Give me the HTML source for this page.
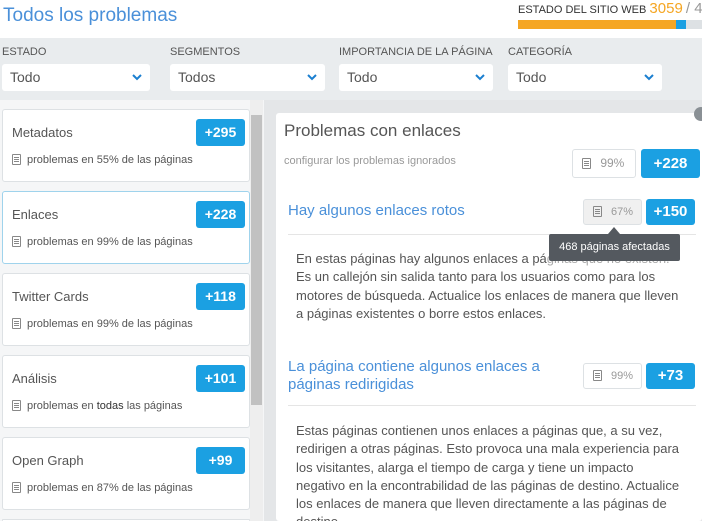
<!DOCTYPE html>
<html style="width:702px;height:521px;overflow:hidden"><head><meta charset="utf-8"><style>
*{box-sizing:border-box;margin:0;padding:0}
body{width:702px;height:521px;overflow:hidden;background:#e9ecee;font-family:"Liberation Sans",sans-serif;position:relative;color:#555}
.a{position:absolute;white-space:nowrap}
.sel{position:absolute;top:64px;height:27px;width:148px;background:#fff;border-radius:3px;font-size:14px;color:#555;padding:5px 8px}
.sel svg{position:absolute;right:8px;top:10px}
.lbl{position:absolute;top:46px;font-size:11px;color:#555}
.card{position:absolute;left:2px;width:248px;height:73px;background:#fff;border:1px solid #dde1e4;border-radius:3px;overflow:hidden}
.card .t{position:absolute;left:9px;top:15px;font-size:13px;color:#555}
.card .b{position:absolute;right:4px;top:9px;width:49px;height:27px;background:#1ba0e2;color:#fff;font-size:14px;font-weight:bold;text-align:center;line-height:27px;border-radius:3px}
.card .s{position:absolute;left:9px;top:44px;font-size:11px;color:#555;white-space:nowrap}
.ic{display:inline-block;width:9px;height:11px;border:1px solid #888;border-radius:1px;vertical-align:-2px;margin-right:6px;background:linear-gradient(#888,#888) 1px 2px/5px 1px no-repeat,linear-gradient(#888,#888) 1px 4px/5px 1px no-repeat,linear-gradient(#888,#888) 1px 6px/5px 1px no-repeat}
.bb{position:absolute;background:#1ba0e2;color:#fff;font-weight:bold;font-size:14px;text-align:center;border-radius:3px}
.pc{position:absolute;border:1px solid #dde1e4;border-radius:3px;font-size:11px;color:#999;padding-left:9px;white-space:nowrap}
.p{position:absolute;font-size:13px;line-height:18.3px;color:#555;white-space:nowrap}
</style></head><body>
<div class="a" style="left:0;top:0;width:702px;height:38px;background:#fff"></div>
<div class="a" style="left:3px;top:5px;font-size:19px;color:#4a90d9">Todos los problemas</div>
<div class="a" style="left:518px;top:0px;font-size:11px;color:#333">ESTADO DEL SITIO WEB <span style="color:#f5a623;font-size:15px">3059</span> <span style="color:#999;font-size:15px">/ 4</span></div>
<div class="a" style="left:518px;top:20px;width:184px;height:9px;background:#dde1e4"></div>
<div class="a" style="left:518px;top:20px;width:158px;height:9px;background:#f5a623"></div>
<div class="a" style="left:676px;top:20px;width:10px;height:9px;background:#1ba0e2"></div>
<div class="lbl" style="left:2px">ESTADO</div>
<div class="lbl" style="left:170px">SEGMENTOS</div>
<div class="lbl" style="left:339px">IMPORTANCIA DE LA PÁGINA</div>
<div class="lbl" style="left:508px">CATEGORÍA</div>
<div class="sel" style="left:2px">Todo<svg width="10" height="7"><path d="M1 1l4 4 4-4" stroke="#1b7fd0" stroke-width="2" fill="none"/></svg></div>
<div class="sel" style="left:170px;width:155px">Todos<svg width="10" height="7"><path d="M1 1l4 4 4-4" stroke="#1b7fd0" stroke-width="2" fill="none"/></svg></div>
<div class="sel" style="left:339px;width:154px">Todo<svg width="10" height="7"><path d="M1 1l4 4 4-4" stroke="#1b7fd0" stroke-width="2" fill="none"/></svg></div>
<div class="sel" style="left:508px;width:154px">Todo<svg width="10" height="7"><path d="M1 1l4 4 4-4" stroke="#1b7fd0" stroke-width="2" fill="none"/></svg></div>
<div class="a" style="left:0;top:100px;width:264px;height:421px;background:#f5f6f7"></div>
<div class="a" style="left:250px;top:100px;width:13px;height:421px;background:#eee"></div>
<div class="a" style="left:251px;top:115px;width:11px;height:290px;background:#c1c1c1"></div>
<div class="card" style="top:109px"><div class="t">Metadatos</div><div class="b">+295</div><div class="s"><span class="ic"></span>problemas en 55% de las páginas</div></div>
<div class="card" style="top:191px;border-color:#9fd3ec"><div class="t">Enlaces</div><div class="b">+228</div><div class="s"><span class="ic"></span>problemas en 99% de las páginas</div></div>
<div class="card" style="top:273px"><div class="t">Twitter Cards</div><div class="b">+118</div><div class="s"><span class="ic"></span>problemas en 99% de las páginas</div></div>
<div class="card" style="top:355px"><div class="t">Análisis</div><div class="b">+101</div><div class="s"><span class="ic"></span>problemas en <b style="font-weight:normal;color:#333">todas</b> las páginas</div></div>
<div class="card" style="top:437px"><div class="t">Open Graph</div><div class="b">+99</div><div class="s"><span class="ic"></span>problemas en 87% de las páginas</div></div>
<div class="card" style="top:519px;height:2px;border-bottom:none"></div>
<div class="a" style="left:264px;top:100px;width:438px;height:421px;background:#e4e6e8"></div>
<div class="a" style="left:276px;top:113px;width:426px;height:408px;background:#fff;border-radius:3px"></div>
<div class="a" style="left:694px;top:107px;width:14px;height:14px;border-radius:50%;background:#8a9095"></div>
<div class="a" style="left:284px;top:121px;font-size:17px;color:#555">Problemas con enlaces</div>
<div class="a" style="left:284px;top:155px;font-size:11px;color:#999">configurar los problemas ignorados</div>
<div class="pc" style="left:572px;top:149px;width:64px;height:29px;line-height:27px;font-size:12px"><span class="ic"></span> 99%</div>
<div class="bb" style="left:641px;top:149px;width:59px;height:29px;line-height:29px;font-size:15px">+228</div>
<div class="a" style="left:288px;top:202px;font-size:15px;color:#4a90d9">Hay algunos enlaces rotos</div>
<div class="pc" style="left:583px;top:199px;width:59px;height:26px;line-height:24px;background:#f0f0f0"><span class="ic"></span> 67%</div>
<div class="bb" style="left:646px;top:199px;width:49px;height:26px;line-height:26px;font-size:15px">+150</div>
<div class="a" style="left:288px;top:234px;width:408px;height:1px;background:#e5e5e5"></div>
<div class="p" style="left:296px;top:250px;width:400px">En estas páginas hay algunos enlaces a pá<span style="color:#aaa">ginas que no existen.</span><br>Es un callejón sin salida tanto para los usuarios como para los<br>motores de búsqueda. Actualice los enlaces de manera que lleven<br>a páginas existentes o borre estos enlaces.</div>
<div class="a" style="left:549px;top:234px;width:131px;height:27px;background:#54595f;border-radius:2px;color:#fff;font-size:11px;line-height:27px;text-align:center">468 páginas afectadas</div>
<div class="a" style="left:608px;top:227px;width:0;height:0;border-left:6px solid transparent;border-right:6px solid transparent;border-bottom:7px solid #54595f"></div>
<div class="a" style="left:288px;top:358px;font-size:15px;line-height:18px;color:#4a90d9">La página contiene algunos enlaces a<br>páginas redirigidas</div>
<div class="pc" style="left:583px;top:363px;width:59px;height:26px;line-height:24px"><span class="ic"></span> 99%</div>
<div class="bb" style="left:646px;top:363px;width:49px;height:26px;line-height:26px;font-size:15px">+73</div>
<div class="a" style="left:288px;top:405px;width:408px;height:1px;background:#e5e5e5"></div>
<div class="p" style="left:296px;top:422px;width:405px">Estas páginas contienen unos enlaces a páginas que, a su vez,<br>redirigen a otras páginas. Esto provoca una mala experiencia para<br>los visitantes, alarga el tiempo de carga y tiene un impacto<br>negativo en la encontrabilidad de las páginas de destino. Actualice<br>los enlaces de manera que lleven directamente a las páginas de<br>destino.</div>
</body></html>
